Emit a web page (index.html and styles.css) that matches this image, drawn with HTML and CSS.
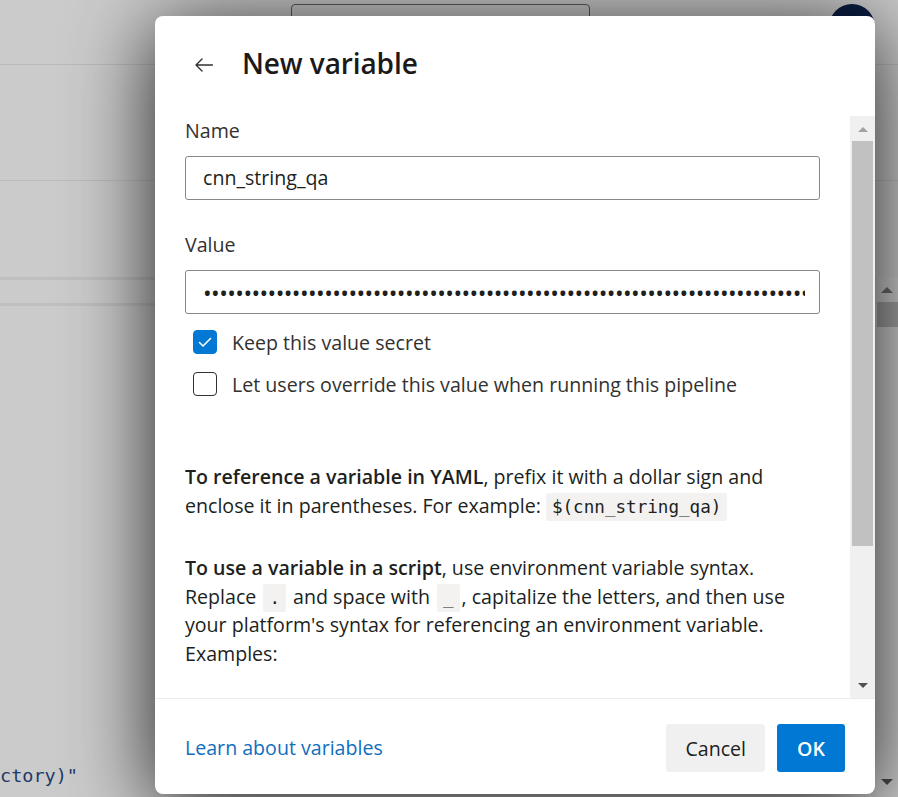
FILE: index.html
```html
<!DOCTYPE html>
<html lang="en">
<head>
<meta charset="utf-8">
<title>New variable</title>
<link rel="stylesheet" href="styles.css">
</head>
<body>
<div class="page">
  <header class="topbar">
    <div class="search-box"></div>
    <div class="avatar"></div>
  </header>
  <div class="subbar"></div>
  <div class="toolbar"></div>
  <div class="workspace">
    <div class="editor">
      <div class="tabs"></div>
      <div class="code-lines">
        <div class="code-line">ctory)"</div>
      </div>
    </div>
    <div class="page-scroll">
      <div class="ps-up"></div>
      <div class="ps-thumb"></div>
      <div class="ps-fill"></div>
      <div class="ps-down"></div>
    </div>
  </div>
</div>

<div class="dialog" role="dialog" aria-label="New variable">
  <div class="dialog-header">
    <svg class="back" width="18" height="14" viewBox="0 0 18 14" aria-hidden="true">
      <path d="M1 7H17.5M7 1L1 7L7 13" fill="none" stroke="#323130" stroke-width="1.4" stroke-linecap="round" stroke-linejoin="round"/>
    </svg>
    <h1 class="title">New variable</h1>
  </div>

  <div class="dialog-body">
    <div class="content">
      <div class="field">
        <div class="label">Name</div>
        <div class="input">cnn_string_qa</div>
      </div>
      <div class="field">
        <div class="label">Value</div>
        <div class="input"><span class="dots">&bull;&bull;&bull;&bull;&bull;&bull;&bull;&bull;&bull;&bull;&bull;&bull;&bull;&bull;&bull;&bull;&bull;&bull;&bull;&bull;&bull;&bull;&bull;&bull;&bull;&bull;&bull;&bull;&bull;&bull;&bull;&bull;&bull;&bull;&bull;&bull;&bull;&bull;&bull;&bull;&bull;&bull;&bull;&bull;&bull;&bull;&bull;&bull;&bull;&bull;&bull;&bull;&bull;&bull;&bull;&bull;&bull;&bull;&bull;&bull;&bull;&bull;&bull;&bull;&bull;&bull;&bull;&bull;&bull;&bull;&bull;&bull;&bull;&bull;&bull;&bull;&bull;&bull;&bull;&bull;&bull;&bull;&bull;&bull;&bull;&bull;&bull;&bull;&bull;&bull;&bull;&bull;&bull;&bull;&bull;&bull;&bull;&bull;&bull;&bull;</span></div>
      </div>

      <div class="check-row first">
        <span class="box checked">
          <svg width="24" height="24" viewBox="0 0 24 24" aria-hidden="true"><path d="M6.5 12.5L10 16L17.5 8.5" fill="none" stroke="#fff" stroke-width="1.6" stroke-linecap="round" stroke-linejoin="round"/></svg>
        </span>
        <span>Keep this value secret</span>
      </div>
      <div class="check-row second">
        <span class="box"></span>
        <span>Let users override this value when running this pipeline</span>
      </div>

      <p class="info first"><strong>To reference a variable in YAML</strong>, prefix it with a dollar sign and enclose it in parentheses. For example: <code>$(cnn_string_qa)</code></p>
      <p class="info"><strong>To use a variable in a script</strong>, use environment variable syntax. Replace <code class="sym">.</code> and space with <code class="sym">_</code>, capitalize the letters, and then use your platform's syntax for referencing an environment variable. Examples:</p>
    </div>
    <div class="scrollbar" aria-hidden="true">
      <div class="sb-arrow up"></div>
      <div class="sb-thumb"></div>
      <div class="sb-space"></div>
      <div class="sb-arrow down"></div>
    </div>
  </div>

  <div class="dialog-footer">
    <a class="link" href="#">Learn about variables</a>
    <button class="btn">Cancel</button>
    <button class="btn primary">OK</button>
  </div>
</div>
</body>
</html>
```
FILE: styles.css
```css
html, body {
  margin: 0;
  padding: 0;
}

body {
  width: 898px;
  height: 797px;
  overflow: hidden;
  background: #cbcbcb;
  font-family: "Open Sans", "Noto Sans", sans-serif;
  font-size: 19.6px;
  color: #201f1e;
  position: relative;
}

/* ---------- background page (under the modal overlay) ---------- */
.page {
  display: flex;
  flex-direction: column;
  height: 797px;
}

.topbar {
  height: 64px;
  border-bottom: 1px solid #bababa;
  display: flex;
  align-items: flex-start;
  flex-shrink: 0;
}

.search-box {
  margin: 4px 0 0 291px;
  width: 297px;
  height: 44px;
  border: 1px solid #5a5a5a;
  border-radius: 4px;
}

.avatar {
  margin: 4px 23px 0 auto;
  width: 46px;
  height: 46px;
  border-radius: 50%;
  background: #0b1d42;
}

.subbar {
  height: 115px;
  border-bottom: 1px solid #bcbcbc;
  flex-shrink: 0;
}

.toolbar {
  height: 96px;
  flex-shrink: 0;
}

.workspace {
  flex: 1;
  display: flex;
  min-height: 0;
}

.editor {
  flex: 1;
  display: flex;
  flex-direction: column;
}

.tabs {
  height: 23px;
  border-top: 3px solid #bfbfbf;
  border-bottom: 3px solid #bfbfbf;
}

.code-lines {
  flex: 1;
  display: flex;
  flex-direction: column;
  justify-content: flex-end;
  padding-bottom: 8px;
}

.code-line {
  font-family: "DejaVu Sans Mono", "Liberation Mono", monospace;
  font-size: 18.5px;
  line-height: 26px;
  color: #1d3a6a;
  white-space: pre;
}

.page-scroll {
  width: 22px;
  display: flex;
  flex-direction: column;
  align-items: center;
  background: #cfcfcf;
}

.ps-up {
  margin-top: 10px;
  width: 0;
  height: 0;
  border-left: 6px solid transparent;
  border-right: 6px solid transparent;
  border-bottom: 6px solid #6d6d6d;
}

.ps-thumb {
  margin-top: 9px;
  width: 21px;
  height: 25px;
  background: #a4a4a4;
}

.ps-fill {
  flex: 1;
}

.ps-down {
  margin-bottom: 12px;
  width: 0;
  height: 0;
  border-left: 6px solid transparent;
  border-right: 6px solid transparent;
  border-top: 6px solid #4a4a4a;
}

/* ---------- dialog ---------- */
.dialog {
  position: absolute;
  left: 155px;
  top: 16px;
  width: 720px;
  height: 778px;
  background: #fff;
  border-radius: 8px;
  overflow: hidden;
  display: flex;
  flex-direction: column;
  box-shadow: 0 12px 84px rgba(0, 0, 0, 0.85);
}

.dialog-header {
  height: 100px;
  box-sizing: border-box;
  padding: 29px 30px 0 40px;
  display: flex;
  align-items: flex-start;
  flex-shrink: 0;
}

.back {
  margin-top: 13px;
  flex-shrink: 0;
}

.title {
  margin: 0 0 0 29px;
  font-size: 28px;
  line-height: 36px;
  font-weight: 600;
  color: #1b1a19;
  letter-spacing: -0.1px;
}

.dialog-body {
  flex: 1;
  display: flex;
  min-height: 0;
}

.content {
  flex: 1;
  overflow: hidden;
  padding: 1px 30px 0 30px;
}

.label {
  line-height: 28px;
  color: #323130;
  margin-bottom: 11px;
}

.field + .field {
  margin-top: 31px;
}

.input {
  height: 44px;
  box-sizing: border-box;
  border: 1px solid #8a8886;
  border-radius: 3px;
  padding: 0 14px 0 17px;
  display: flex;
  align-items: center;
  color: #201f1e;
  line-height: 28px;
}

.dots {
  flex: 1;
  overflow: hidden;
  white-space: nowrap;
  font-size: 23px;
  letter-spacing: -0.57px;
  color: #201f1e;
  margin-top: 2px;
}

.check-row {
  display: flex;
  align-items: center;
  gap: 15px;
  height: 28px;
  padding-left: 8px;
  color: #323130;
}

.check-row.first {
  margin-top: 14px;
}

.check-row.second {
  margin-top: 14px;
}

.box {
  width: 24px;
  height: 24px;
  box-sizing: border-box;
  border: 1px solid #323130;
  border-radius: 4px;
  background: #fff;
  flex-shrink: 0;
  display: flex;
}

.box.checked {
  background: #0078d4;
  border-color: #0078d4;
}

.box.checked svg {
  margin: -1px;
}

.info {
  margin: 34px 0 0;
  line-height: 28.6px;
  color: #201f1e;
}

.info.first {
  margin-top: 65px;
}

.info strong {
  font-weight: 600;
}

code {
  font-family: "DejaVu Sans Mono", "Liberation Mono", monospace;
  font-size: 17.6px;
  line-height: 1;
  background: #f3f2f1;
  padding: 4px 6px;
  border-radius: 2px;
  color: #201f1e;
}

code.sym {
  margin: 0 2px;
}

/* fake scrollbar of the dialog body */
.scrollbar {
  width: 25px;
  background: #f0f0f0;
  display: flex;
  flex-direction: column;
  align-items: center;
  flex-shrink: 0;
}

.sb-arrow {
  width: 0;
  height: 0;
  border-left: 5px solid transparent;
  border-right: 5px solid transparent;
}

.sb-arrow.up {
  margin-top: 11px;
  border-bottom: 5px solid #a3a3a3;
}

.sb-arrow.down {
  margin-bottom: 10px;
  border-top: 5px solid #505050;
}

.sb-thumb {
  margin-top: 9px;
  width: 21px;
  height: 405px;
  background: #c1c1c1;
}

.sb-space {
  flex: 1;
}

/* footer */
.dialog-footer {
  flex-shrink: 0;
  border-top: 1px solid #edebe9;
  padding: 25px 30px 22px;
  display: flex;
  align-items: center;
  gap: 12px;
}

.link {
  flex: 1;
  color: #106ebe;
  text-decoration: none;
  line-height: 28px;
}

.btn {
  height: 48px;
  border: none;
  border-radius: 3px;
  padding: 0 19px;
  font-family: inherit;
  font-size: 19.6px;
  background: #f0f0f0;
  color: #201f1e;
}

.btn.primary {
  background: #0078d4;
  color: #fff;
  font-weight: 600;
  padding: 0 20px;
}
```
